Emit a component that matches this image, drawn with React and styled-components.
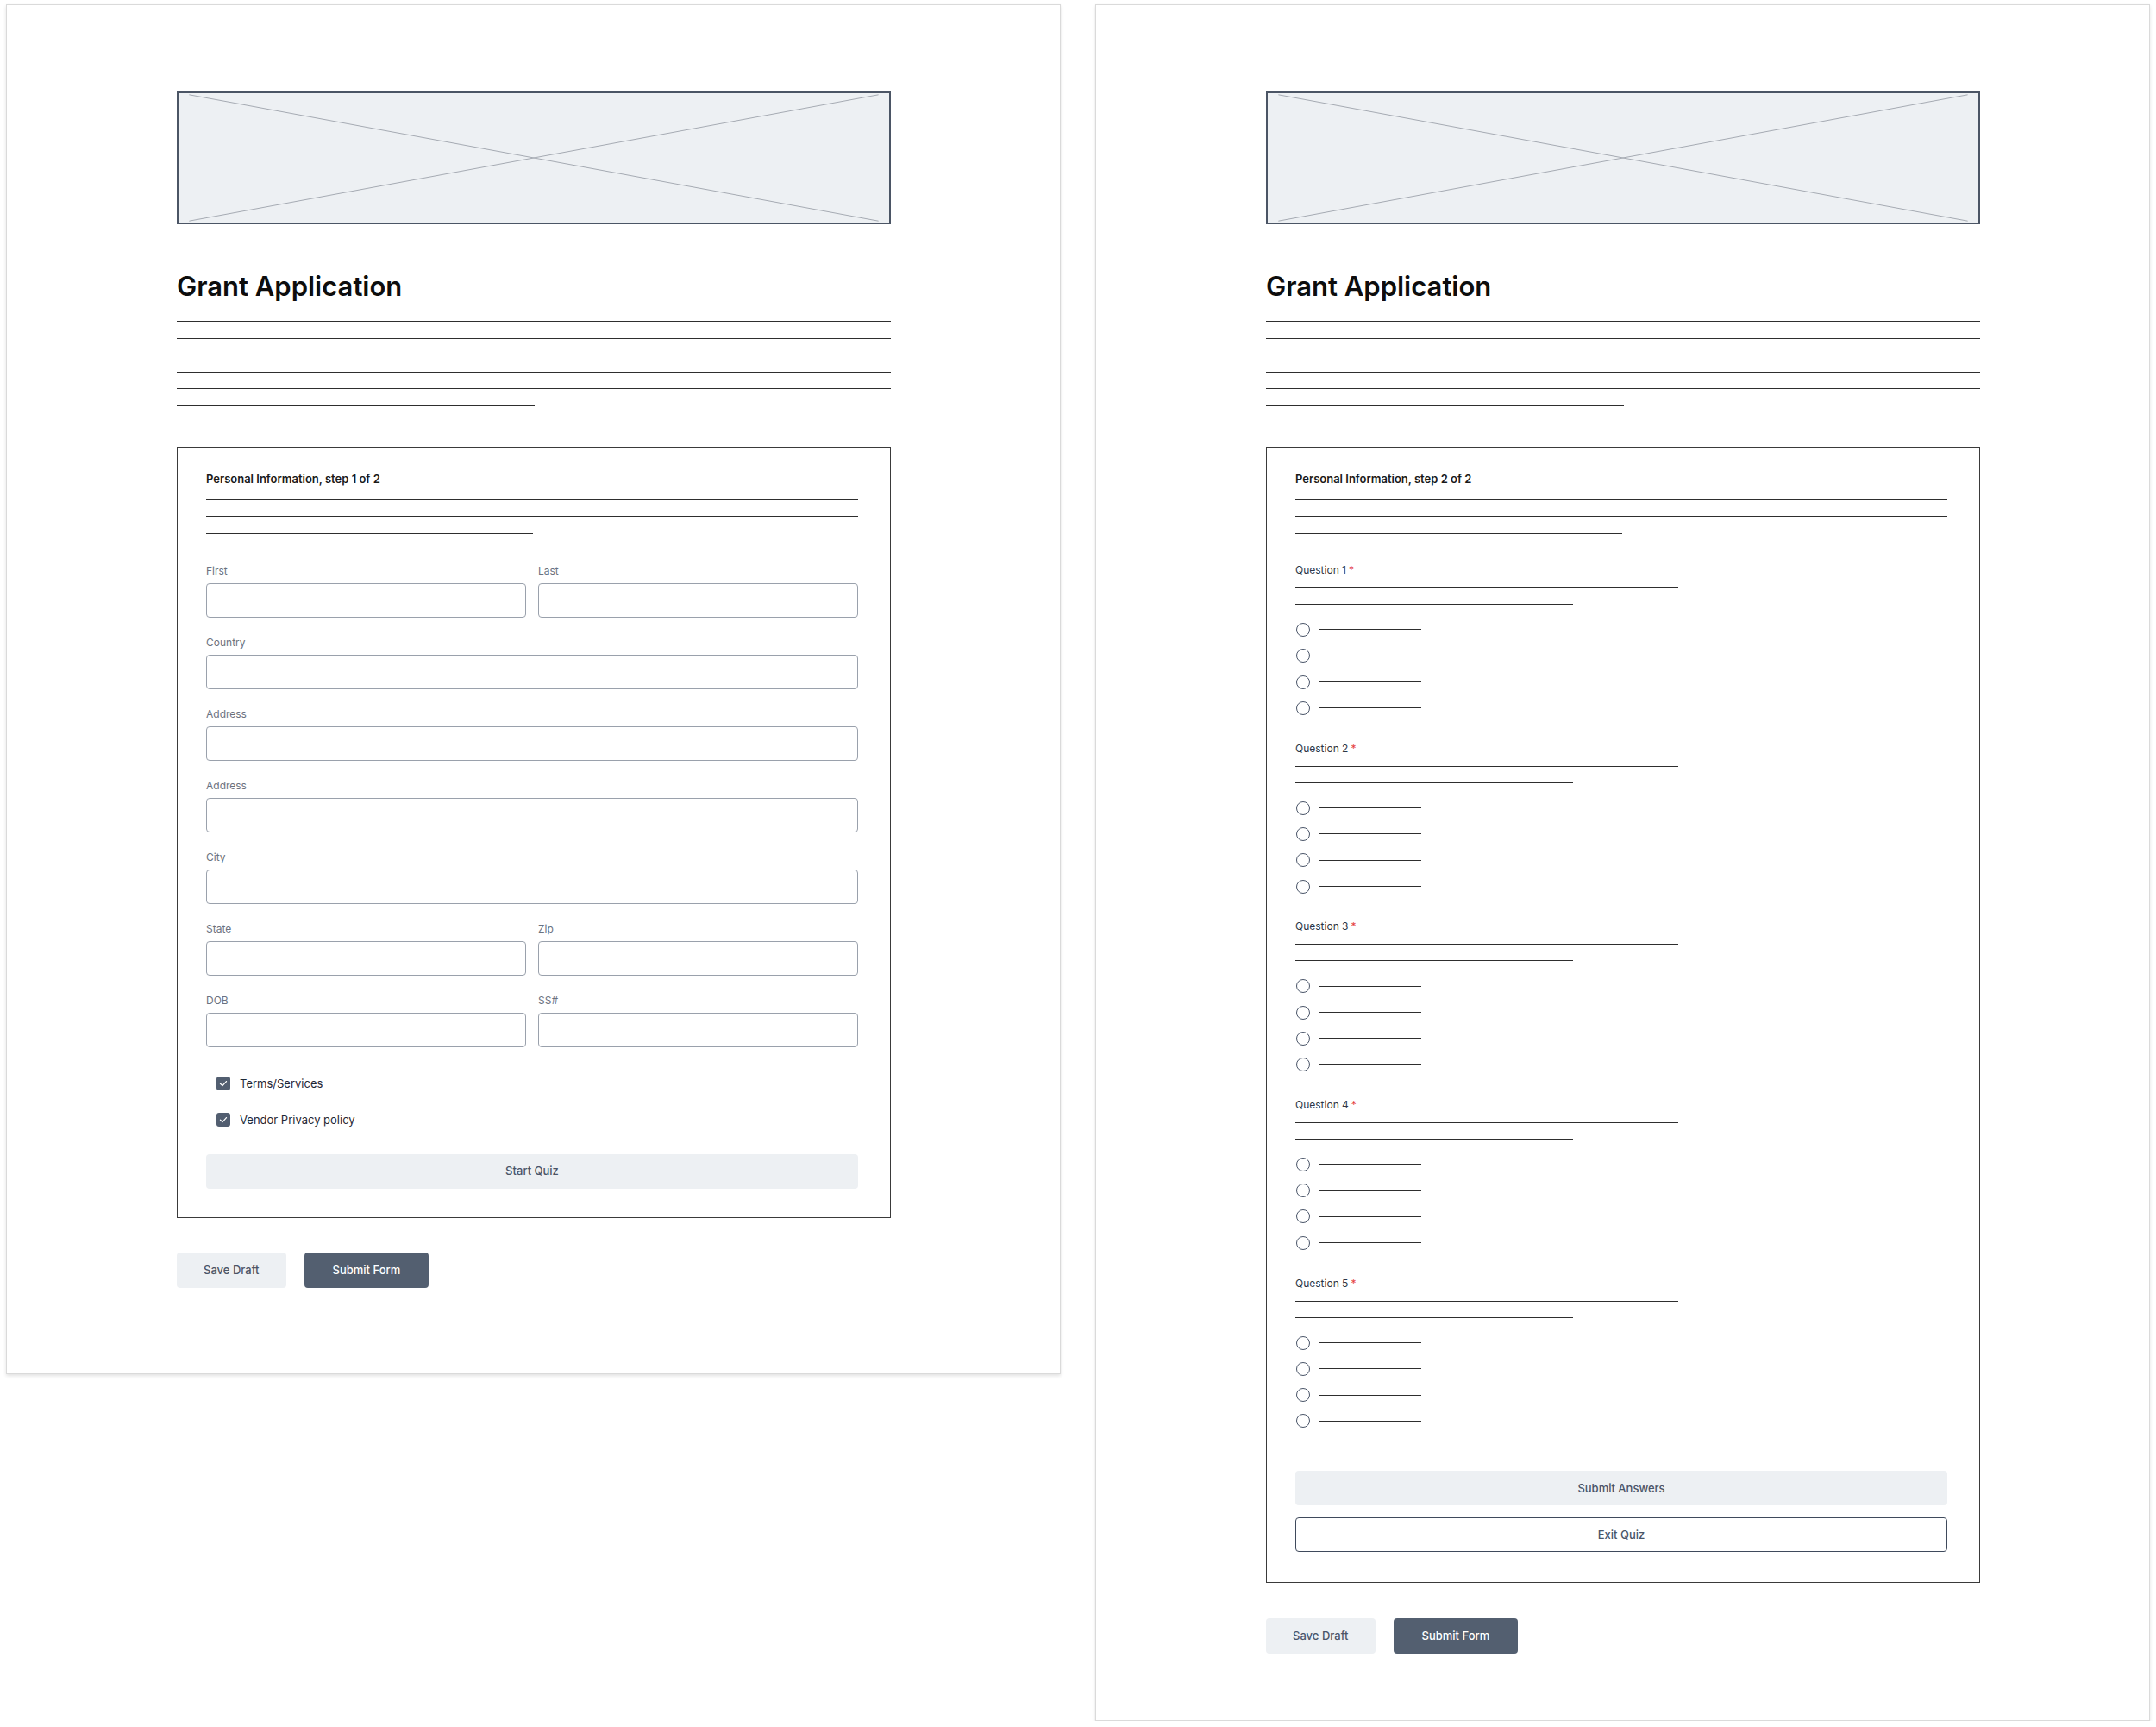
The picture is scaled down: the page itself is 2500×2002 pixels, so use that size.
import React from "react";
import styled, { createGlobalStyle } from "styled-components";

const GlobalStyle = createGlobalStyle`
  *, *::before, *::after { box-sizing: border-box; }
  html, body { margin: 0; padding: 0; background: #ffffff; }
  body {
    font-family: Inter, "Liberation Sans", Arial, sans-serif;
    color: #1f2937;
    -webkit-font-smoothing: antialiased;
  }
`;

const Canvas = styled.div`
  display: flex;
  align-items: flex-start;
  gap: 40px;
  padding: 5px 0 0 7px;
`;

const Page = styled.section`
  width: 1223px;
  background: #ffffff;
  border: 1px solid #dadada;
  box-shadow: 0 2px 4px rgba(0, 0, 0, 0.12);
  padding: 100px 196px ${(p) => p.$bottom}px 197px;
  display: flex;
  flex-direction: column;
`;

const Banner = styled.div`
  height: 154px;
  border: 2px solid #4b5565;
  background: #edf0f3;

  svg {
    display: block;
    width: 100%;
    height: 100%;
  }
`;

const Title = styled.h1`
  margin: 54px 0 0;
  font: 600 31px/36px Inter, "Liberation Sans", sans-serif;
  letter-spacing: 0;
  color: #0d0d0d;
`;

const RuleStack = styled.div`
  display: flex;
  flex-direction: column;
  gap: ${(p) => p.$gap}px;
  margin-top: ${(p) => p.$top}px;
`;

const Rule = styled.div`
  height: 1px;
  width: ${(p) => (p.$w ? `${p.$w}px` : "100%")};
  background: #2e2e2e;
`;

const Card = styled.div`
  margin-top: 47px;
  border: 1px solid #3a3a3a;
  padding: 28px 37px ${(p) => p.$bottom}px 33px;
  display: flex;
  flex-direction: column;
`;

const CardTitle = styled.h2`
  margin: 0;
  font: 600 13px/16px Inter, "Liberation Sans", sans-serif;
  color: #1a1a1a;
`;

const FieldGrid = styled.div`
  margin-top: 35px;
  display: grid;
  grid-template-columns: 1fr 1fr;
  column-gap: 14px;
  row-gap: 21px;
`;

const Field = styled.label`
  display: flex;
  flex-direction: column;
  gap: 6px;
  grid-column: ${(p) => (p.$wide ? "1 / -1" : "auto")};
`;

const FieldLabel = styled.span`
  font: 400 12px/16px Inter, "Liberation Sans", sans-serif;
  color: #6b7280;
`;

const Input = styled.input`
  height: 40px;
  width: 100%;
  border: 1px solid #9aa1ac;
  border-radius: 4px;
  background: #ffffff;
  padding: 0 12px;
  font: 400 13px Inter, sans-serif;
  outline: none;
`;

const CheckList = styled.div`
  margin-top: 34px;
  padding-left: 12px;
  display: flex;
  flex-direction: column;
  gap: 26px;
`;

const CheckRow = styled.label`
  display: flex;
  align-items: center;
  gap: 11px;
  height: 16px;
  font: 400 13px/16px Inter, "Liberation Sans", sans-serif;
  color: #1f2937;
`;

const CheckBox = styled.span`
  width: 16px;
  height: 16px;
  border-radius: 3px;
  background: #525e70;
  display: grid;
  place-items: center;

  svg {
    display: block;
  }
`;

const WideButton = styled.button`
  margin-top: ${(p) => p.$top}px;
  height: 40px;
  width: 100%;
  border-radius: 4px;
  font: 500 13px/1 Inter, "Liberation Sans", sans-serif;
  color: #4a5568;
  background: ${(p) => (p.$outline ? "#ffffff" : "#edf0f3")};
  border: ${(p) => (p.$outline ? "1.5px solid #3f4a5c" : "none")};
  cursor: pointer;
`;

const Actions = styled.div`
  margin-top: ${(p) => p.$top}px;
  display: flex;
  gap: 21px;
`;

const ActionButton = styled.button`
  height: 41px;
  padding: 0 ${(p) => (p.$primary ? 33 : 31)}px;
  border: none;
  border-radius: 4px;
  font: 500 13px/1 Inter, "Liberation Sans", sans-serif;
  color: ${(p) => (p.$primary ? "#ffffff" : "#4a5568")};
  background: ${(p) => (p.$primary ? "#535f70" : "#edf0f3")};
  cursor: pointer;
`;

const QuestionList = styled.div`
  margin-top: 34px;
  display: flex;
  flex-direction: column;
  gap: 30.75px;
`;

const Question = styled.div`
  display: flex;
  flex-direction: column;
`;

const QuestionLabel = styled.div`
  font: 400 12px/16px Inter, "Liberation Sans", sans-serif;
  color: #2d3748;
`;

const Required = styled.span`
  color: #e53e3e;
  margin-left: 3px;
`;

const RadioList = styled.div`
  margin-top: 21px;
  display: flex;
  flex-direction: column;
  gap: 14.3px;
`;

const RadioRow = styled.div`
  display: flex;
  align-items: center;
  gap: 10px;
  padding-left: 1px;
  height: 16px;
`;

const Radio = styled.span`
  width: 16px;
  height: 16px;
  border-radius: 50%;
  border: 1.5px solid #4a5568;
  background: #ffffff;
`;

function PlaceholderImage() {
  return (
    <Banner>
      <svg xmlns="http://www.w3.org/2000/svg">
        <line x1="1.5%" y1="1.2%" x2="98.5%" y2="98.8%" stroke="#a6abb3" strokeWidth="1" />
        <line x1="98.5%" y1="1.2%" x2="1.5%" y2="98.8%" stroke="#a6abb3" strokeWidth="1" />
      </svg>
    </Banner>
  );
}

function Intro() {
  return (
    <>
      <PlaceholderImage />
      <Title>Grant Application</Title>
      <RuleStack $top={22} $gap={18.6}>
        <Rule />
        <Rule />
        <Rule />
        <Rule />
        <Rule />
        <Rule $w={415} />
      </RuleStack>
    </>
  );
}

function CardHeader({ step }) {
  return (
    <>
      <CardTitle>Personal Information, step {step} of 2</CardTitle>
      <RuleStack $top={16} $gap={18.5}>
        <Rule />
        <Rule />
        <Rule $w={379} />
      </RuleStack>
    </>
  );
}

function Check({ children }) {
  return (
    <CheckRow>
      <CheckBox>
        <svg width="12" height="12" viewBox="0 0 12 12">
          <polyline points="2.5,6.2 5,8.6 9.5,3.6" fill="none" stroke="#ffffff" strokeWidth="1.3" strokeLinecap="round" strokeLinejoin="round" />
        </svg>
      </CheckBox>
      {children}
    </CheckRow>
  );
}

function FormActions({ top }) {
  return (
    <Actions $top={top}>
      <ActionButton>Save Draft</ActionButton>
      <ActionButton $primary>Submit Form</ActionButton>
    </Actions>
  );
}

const fields = [
  { label: "First" },
  { label: "Last" },
  { label: "Country", wide: true },
  { label: "Address", wide: true },
  { label: "Address", wide: true },
  { label: "City", wide: true },
  { label: "State" },
  { label: "Zip" },
  { label: "DOB" },
  { label: "SS#" },
];

function StepOne() {
  return (
    <Page $bottom={99}>
      <Intro />
      <Card $bottom={33}>
        <CardHeader step={1} />
        <FieldGrid>
          {fields.map((f, i) => (
            <Field key={i} $wide={f.wide}>
              <FieldLabel>{f.label}</FieldLabel>
              <Input type="text" />
            </Field>
          ))}
        </FieldGrid>
        <CheckList>
          <Check>Terms/Services</Check>
          <Check>Vendor Privacy policy</Check>
        </CheckList>
        <WideButton $top={32}>Start Quiz</WideButton>
      </Card>
      <FormActions top={40} />
    </Page>
  );
}

function QuizQuestion({ n }) {
  return (
    <Question>
      <QuestionLabel>
        Question {n}
        <Required>*</Required>
      </QuestionLabel>
      <RuleStack $top={12} $gap={18}>
        <Rule $w={444} />
        <Rule $w={322} />
      </RuleStack>
      <RadioList>
        {[0, 1, 2, 3].map((k) => (
          <RadioRow key={k}>
            <Radio />
            <Rule $w={119} />
          </RadioRow>
        ))}
      </RadioList>
    </Question>
  );
}

function StepTwo() {
  return (
    <Page $bottom={77}>
      <Intro />
      <Card $bottom={35}>
        <CardHeader step={2} />
        <QuestionList>
          {[1, 2, 3, 4, 5].map((n) => (
            <QuizQuestion key={n} n={n} />
          ))}
        </QuestionList>
        <WideButton $top={50}>Submit Answers</WideButton>
        <WideButton $top={14} $outline>
          Exit Quiz
        </WideButton>
      </Card>
      <FormActions top={41} />
    </Page>
  );
}

export default function App() {
  return (
    <>
      <GlobalStyle />
      <Canvas>
        <StepOne />
        <StepTwo />
      </Canvas>
    </>
  );
}
